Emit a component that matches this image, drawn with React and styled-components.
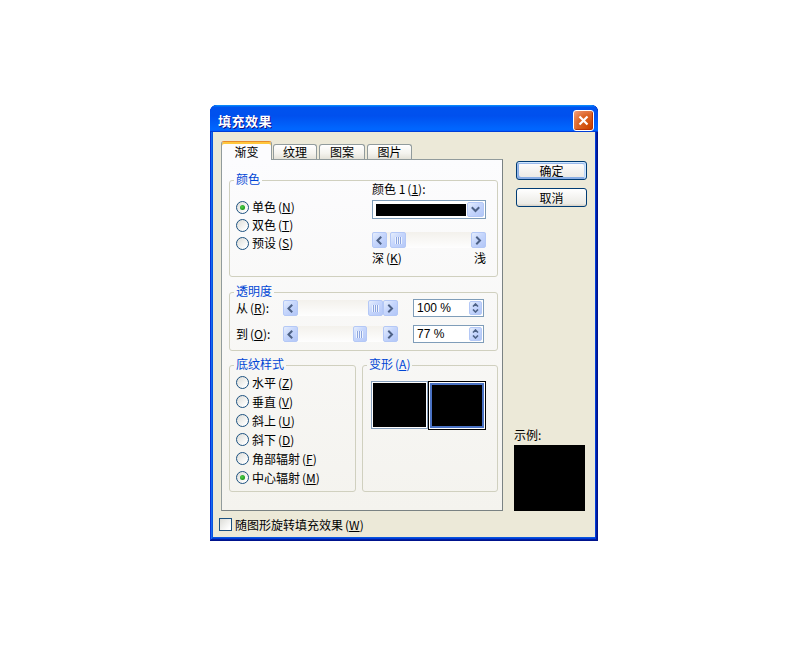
import React from 'react';
import styled, { createGlobalStyle } from 'styled-components';

const GlobalStyle = createGlobalStyle`
  html, body { margin: 0; padding: 0; background: #fff; }
  body {
    font-family: "Noto Sans CJK SC", "Liberation Sans", sans-serif;
    font-size: 12px;
    color: #000;
  }
  * { box-sizing: border-box; }
`;

const Page = styled.div`
  width: 809px;
  height: 647px;
  padding: 105px 0 0 210px;
  display: flex;
  align-items: flex-start;
`;

const Window = styled.div`
  width: 388px;
  height: 436px;
  display: flex;
  flex-direction: column;
  background: #0855dd;
  border-radius: 7px 7px 0 0;
  overflow: hidden;
  box-shadow: inset -1px -1px #00138c, inset 1px 1px #0831d9,
    inset -2px -2px #001ea0, inset 2px 2px #166aee,
    inset -3px -3px #003bda, inset 3px 3px #0855dd;
`;

const TitleBar = styled.div`
  height: 27px;
  flex: none;
  display: flex;
  align-items: center;
  justify-content: space-between;
  padding: 4px 4px 0 8px;
  background: linear-gradient(180deg, #0997ff, #0053ee 8%, #0050ee 40%, #06f 88%, #06f 93%, #005bff 95%, #003dd7 96%, #003dd7);
`;

const TitleText = styled.span`
  color: #fff;
  font-weight: 700;
  font-size: 13px;
  line-height: 16px;
  letter-spacing: 0.5px;
  text-shadow: 1px 1px #0f1089;
`;

const CloseButton = styled.div`
  width: 21px;
  height: 21px;
  border: 1px solid #fff;
  border-radius: 3px;
  display: flex;
  align-items: center;
  justify-content: center;
  background: radial-gradient(circle at 85% 85%, #cc4600 0%, #dc6527 55%, #f3a181 100%);
  box-shadow: inset -1px -1px 1px #b63206;
`;

const Client = styled.div`
  flex: 1;
  margin: 0 3px 4px;
  background: #ece9d8;
  padding-top: 9px;
  display: flex;
  flex-direction: column;
`;

const MainRow = styled.div`
  display: flex;
  padding-left: 8px;
`;

const TabArea = styled.div`
  width: 282px;
  display: flex;
  flex-direction: column;
`;

const TabStrip = styled.div`
  height: 18px;
  display: flex;
  align-items: flex-end;
  position: relative;
  z-index: 2;
`;

const Tab = styled.div`
  width: ${(p) => p.$w}px;
  margin-left: ${(p) => p.$ml || 0}px;
  height: ${(p) => (p.$active ? 19 : 15)}px;
  margin-bottom: ${(p) => (p.$active ? -1 : 0)}px;
  border: 1px solid #919b9c;
  border-bottom: none;
  border-radius: 3px 3px 0 0;
  display: flex;
  align-items: center;
  justify-content: center;
  line-height: 14px;
  padding-top: ${(p) => (p.$active ? 2 : 0)}px;
  background: ${(p) =>
    p.$active ? '#fcfcfe' : 'linear-gradient(180deg, #fff 0%, #f4f3ee 60%, #e4e2d8 100%)'};
  ${(p) =>
    p.$active &&
    `border-top: 1px solid #e68b2c; box-shadow: inset 0 2px 0 #ffc73c;`}
`;

const Panel = styled.div`
  height: 352px;
  border: 1px solid #919b9c;
  border-right-color: #7a8283;
  border-bottom-color: #7a8283;
  background: linear-gradient(180deg, #fcfcfe, #f4f3ee);
  padding: 20px 0 0 7px;
  display: flex;
  flex-direction: column;
`;

const Group = styled.div`
  position: relative;
  width: ${(p) => p.$w}px;
  height: ${(p) => p.$h}px;
  margin-bottom: ${(p) => p.$mb || 0}px;
  border: 1px solid #d0d0bf;
  border-radius: 3px;
  padding: ${(p) => p.$pad || '0'};
  display: flex;
  flex-direction: ${(p) => p.$dir || 'row'};
`;

const GroupLabel = styled.span`
  position: absolute;
  top: -10px;
  left: 4px;
  padding: 0 2px;
  line-height: 16px;
  color: #0046d5;
  background: ${(p) => p.$bg};
`;

const Key = styled.span`
  text-decoration: underline;
  text-underline-offset: 1px;
`;

const Acc = styled.span`
  margin-left: 2px;
`;

const LeftCol = styled.div`
  width: 136px;
  padding-top: 17px;
  display: flex;
  flex-direction: column;
`;

const RadioRow = styled.div`
  height: ${(p) => p.$h || 18}px;
  display: flex;
  align-items: center;
  gap: 3px;
  line-height: 14px;
  white-space: nowrap;
`;

const RadioCircle = styled.span`
  width: 13px;
  height: 13px;
  flex: none;
  border-radius: 50%;
  border: 1px solid #1c5180;
  background: linear-gradient(135deg, #dcdcd7 0%, #fff 85%);
  display: flex;
  align-items: center;
  justify-content: center;
  &::after {
    content: '';
    width: 5px;
    height: 5px;
    border-radius: 50%;
    background: ${(p) =>
      p.$checked ? 'radial-gradient(circle at 40% 40%, #55d14c, #21a121 60%, #178a17)' : 'transparent'};
  }
`;

const RightCol = styled.div`
  width: 114px;
  display: flex;
  flex-direction: column;
`;

const TextRow = styled.div`
  height: 16px;
  line-height: 16px;
  display: flex;
  justify-content: space-between;
  margin-top: ${(p) => p.$mt || 0}px;
  white-space: nowrap;
`;

const ColorSelect = styled.div`
  margin-top: 3px;
  height: 19px;
  border: 1px solid #7f9db9;
  background: #fff;
  padding: 1px;
  display: flex;
`;

const Swatch = styled.div`
  flex: 1;
  margin: 2px 1px 1px 2px;
  background: #000;
`;

const BlueBtn = styled.div`
  width: ${(p) => p.$w || 15}px;
  flex: none;
  border: 1px solid #b4c8f6;
  border-radius: 2px;
  background: linear-gradient(135deg, #e6eefc 0%, #c6d6fc 45%, #b2c6f7 100%);
  display: flex;
  flex-direction: column;
  align-items: center;
  justify-content: center;
  gap: ${(p) => p.$gap || 0}px;
`;

const ScrollBar = styled.div`
  margin-top: ${(p) => p.$mt || 0}px;
  width: ${(p) => p.$w}px;
  height: ${(p) => p.$h || 16}px;
  display: flex;
  background: linear-gradient(180deg, #f3f1ec, #fefefe);
`;

const Track = styled.div`
  flex: 1;
  position: relative;
`;

const Thumb = styled.div`
  position: absolute;
  top: 0;
  bottom: 0;
  width: ${(p) => p.$w}px;
  left: calc((100% - ${(p) => p.$w}px) * ${(p) => p.$pos});
  border: 1px solid #b4c8f6;
  border-radius: 2px;
  background: linear-gradient(135deg, #e6eefc 0%, #c6d6fc 45%, #b6c9f8 100%);
  display: flex;
  align-items: center;
  justify-content: center;
`;

const Grip = styled.span`
  width: 7px;
  height: 7px;
  background: repeating-linear-gradient(90deg, #eef4fe 0 1px, #8da5df 1px 2px);
`;

const TransRow = styled.div`
  height: 18px;
  display: flex;
  align-items: center;
  margin-top: ${(p) => p.$mt || 0}px;
  line-height: 14px;
`;

const RowLabel = styled.span`
  width: 47px;
  white-space: nowrap;
`;

const SpinBox = styled.div`
  margin-left: 15px;
  width: 71px;
  height: 18px;
  border: 1px solid #7f9db9;
  background: #fff;
  display: flex;
  align-items: stretch;
  padding: 1px;
`;

const SpinValue = styled.span`
  flex: 1;
  padding-left: 2px;
  line-height: 14px;
  font-family: "Liberation Sans", "Noto Sans CJK SC", sans-serif;
  font-size: 12px;
`;

const BottomRow = styled.div`
  display: flex;
  gap: 6px;
`;

const PreviewRow = styled.div`
  display: flex;
  align-items: flex-start;
`;

const VariantBox = styled.div`
  width: ${(p) => (p.$selected ? 58 : 57)}px;
  height: ${(p) => (p.$selected ? 49 : 48)}px;
  background: #000;
  ${(p) =>
    p.$selected
      ? `border: 1px dotted #000; box-shadow: inset 0 0 0 1px #fff, inset 0 0 0 3px #4a72c4;`
      : `border: 1px solid #86a0bd; box-shadow: inset 0 0 0 1px #fff;`}
`;

const SideCol = styled.div`
  margin-left: 11px;
  width: 72px;
  display: flex;
  flex-direction: column;
  justify-content: space-between;
  padding-top: 20px;
`;

const Buttons = styled.div`
  display: flex;
  flex-direction: column;
  gap: 8px;
  padding-left: 2px;
`;

const Button = styled.div`
  width: 71px;
  height: 19px;
  border: 1px solid #003c74;
  border-radius: 3px;
  background: linear-gradient(180deg, #fff, #ecebe6 86%, #d6d0c5);
  display: flex;
  align-items: center;
  justify-content: center;
  line-height: 14px;
  ${(p) =>
    p.$default &&
    `box-shadow: inset -1px 1px #cee7ff, inset 1px 2px #98b8ea, inset -2px 2px #bcd4f6, inset 1px -1px #89ade4, inset 2px -2px #89ade4;`}
`;

const Sample = styled.div`
  display: flex;
  flex-direction: column;
  gap: 2px;
`;

const SampleBox = styled.div`
  width: 71px;
  height: 66px;
  background: #000;
`;

const CheckRow = styled.div`
  margin-top: 7px;
  padding-left: 6px;
  height: 13px;
  display: flex;
  align-items: center;
  gap: 3px;
  line-height: 14px;
`;

const CheckBox = styled.span`
  width: 13px;
  height: 13px;
  border: 1px solid #1c5180;
  background: linear-gradient(135deg, #dcdcd7 0%, #fff 85%);
`;

const Chevron = ({ dir }) => {
  const d = {
    left: 'M5.5 1.5 L2.5 4.5 L5.5 7.5',
    right: 'M3 1.5 L6 4.5 L3 7.5',
    down: 'M1.5 3 L4.5 6 L7.5 3',
  }[dir];
  return (
    <svg width="9" height="9" viewBox="0 0 9 9">
      <path d={d} fill="none" stroke="#4d6185" strokeWidth="2" strokeLinecap="square" />
    </svg>
  );
};

const SpinArrow = ({ up }) => (
  <svg width="7" height="4" viewBox="0 0 7 4">
    <path
      d={up ? 'M1 3.5 L3.5 1 L6 3.5' : 'M1 0.5 L3.5 3 L6 0.5'}
      fill="none"
      stroke="#4d6185"
      strokeWidth="1.6"
    />
  </svg>
);

const Slider = ({ w, pos, thumbW = 15, mt }) => (
  <ScrollBar $w={w} $mt={mt} $h={16}>
    <BlueBtn>
      <Chevron dir="left" />
    </BlueBtn>
    <Track>
      <Thumb $w={thumbW} $pos={pos}>
        <Grip />
      </Thumb>
    </Track>
    <BlueBtn>
      <Chevron dir="right" />
    </BlueBtn>
  </ScrollBar>
);

const Spin = ({ value }) => (
  <SpinBox>
    <SpinValue>{value}</SpinValue>
    <BlueBtn $w={13} $gap={2}>
      <SpinArrow up />
      <SpinArrow />
    </BlueBtn>
  </SpinBox>
);

const Radio = ({ label, k, checked, h }) => (
  <RadioRow $h={h}>
    <RadioCircle $checked={checked} />
    <span>
      {label}
      <Acc>
        (<Key>{k}</Key>)
      </Acc>
    </span>
  </RadioRow>
);

export default function App() {
  return (
    <>
      <GlobalStyle />
      <Page>
        <Window>
          <TitleBar>
            <TitleText>填充效果</TitleText>
            <CloseButton>
              <svg width="11" height="11" viewBox="0 0 11 11">
                <path d="M1.5 1.5 L9.5 9.5 M9.5 1.5 L1.5 9.5" stroke="#fff" strokeWidth="2.2" />
              </svg>
            </CloseButton>
          </TitleBar>
          <Client>
            <MainRow>
              <TabArea>
                <TabStrip>
                  <Tab $active $w={51}>渐变</Tab>
                  <Tab $w={44} $ml={1}>纹理</Tab>
                  <Tab $w={46} $ml={2}>图案</Tab>
                  <Tab $w={45} $ml={2}>图片</Tab>
                </TabStrip>
                <Panel>
                  <Group $w={269} $h={97} $mb={15} $pad="0 0 0 6px">
                    <GroupLabel $bg="#fcfcfd">颜色</GroupLabel>
                    <LeftCol>
                      <Radio label="单色" k="N" checked />
                      <Radio label="双色" k="T" />
                      <Radio label="预设" k="S" />
                    </LeftCol>
                    <RightCol>
                      <TextRow>
                        <span>
                          颜色 1<Acc>(<Key>1</Key>):</Acc>
                        </span>
                      </TextRow>
                      <ColorSelect>
                        <Swatch />
                        <BlueBtn $w={17}>
                          <Chevron dir="down" />
                        </BlueBtn>
                      </ColorSelect>
                      <Slider w={114} pos={0.05} thumbW={16} mt={13} />
                      <TextRow $mt={2}>
                        <span>
                          深<Acc>(<Key>K</Key>)</Acc>
                        </span>
                        <span>浅</span>
                      </TextRow>
                    </RightCol>
                  </Group>

                  <Group $w={269} $h={59} $mb={14} $dir="column" $pad="6px 0 0 6px">
                    <GroupLabel $bg="#f9f9f8">透明度</GroupLabel>
                    <TransRow>
                      <RowLabel>
                        从<Acc>(<Key>R</Key>):</Acc>
                      </RowLabel>
                      <Slider w={115} pos={1} />
                      <Spin value="100 %" />
                    </TransRow>
                    <TransRow $mt={8}>
                      <RowLabel>
                        到<Acc>(<Key>O</Key>):</Acc>
                      </RowLabel>
                      <Slider w={115} pos={0.77} thumbW={14} />
                      <Spin value="77 %" />
                    </TransRow>
                  </Group>

                  <BottomRow>
                    <Group $w={127} $h={127} $dir="column" $pad="7px 0 0 6px">
                      <GroupLabel $bg="#f7f7f5">底纹样式</GroupLabel>
                      <Radio label="水平" k="Z" h={19} />
                      <Radio label="垂直" k="V" h={19} />
                      <Radio label="斜上" k="U" h={19} />
                      <Radio label="斜下" k="D" h={19} />
                      <Radio label="角部辐射" k="F" h={19} />
                      <Radio label="中心辐射" k="M" h={19} checked />
                    </Group>
                    <Group $w={136} $h={127} $dir="column" $pad="15px 0 0 8px">
                      <GroupLabel $bg="#f7f7f5">
                        变形<Acc>(<Key>A</Key>)</Acc>
                      </GroupLabel>
                      <PreviewRow>
                        <VariantBox />
                        <VariantBox $selected />
                      </PreviewRow>
                    </Group>
                  </BottomRow>
                </Panel>
              </TabArea>
              <SideCol>
                <Buttons>
                  <Button $default>确定</Button>
                  <Button>取消</Button>
                </Buttons>
                <Sample>
                  <TextRow>示例:</TextRow>
                  <SampleBox />
                </Sample>
              </SideCol>
            </MainRow>
            <CheckRow>
              <CheckBox />
              <span>
                随图形旋转填充效果<Acc>(<Key>W</Key>)</Acc>
              </span>
            </CheckRow>
          </Client>
        </Window>
      </Page>
    </>
  );
}
